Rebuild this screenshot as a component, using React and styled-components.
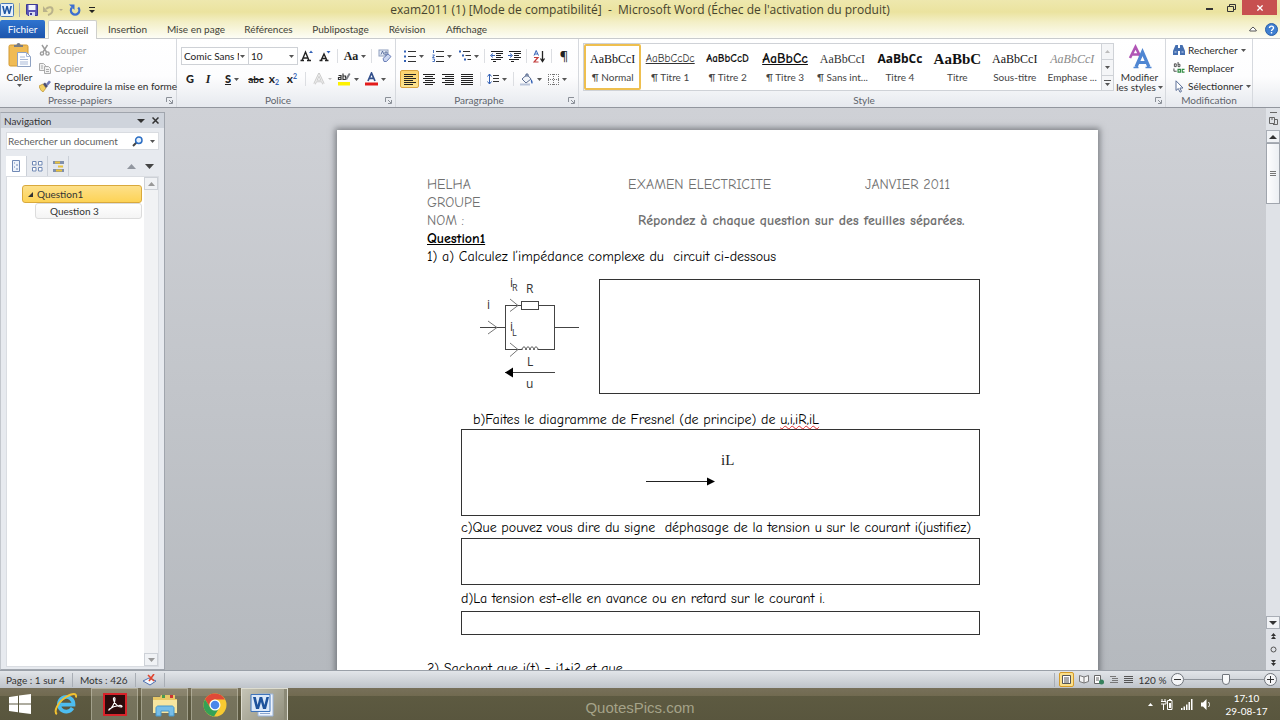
import React from "react"
import styled, { createGlobalStyle } from "styled-components"

const GlobalStyle = createGlobalStyle`
  * {
    box-sizing: border-box;
  }
  body {
    margin: 0;
    font-family: Lato, "Open Sans", sans-serif;
    font-size: 10px;
    line-height: 14px;
    color: #333;
  }
  button, input, select {
    font: inherit;
    color: inherit;
    margin: 0;
  }
  svg {
    display: block;
    flex: none;
  }
`

const Window = styled.div`
  height: 100vh;
  display: flex;
  flex-direction: column;
  overflow: hidden;
  background: #cdd0d5;
`

const TopBars = styled.header`
  background: linear-gradient(#eee8ae 0, #ebe39f 12px, #f3efc6 22px, #fdfdf5 38px);
`

const TitleBar = styled.div`
  height: 20px;
  display: grid;
  grid-template-columns: 1fr auto 1fr;
  align-items: center;
`

const QuickAccess = styled.div`
  display: flex;
  align-items: center;
  gap: 4px;
`

const Title = styled.h1`
  margin: 0;
  font-family: "Open Sans", "Noto Sans", sans-serif;
  font-size: 12px;
  line-height: 20px;
  font-weight: 400;
  color: #45432f;
  white-space: pre;
`

const WindowControls = styled.div`
  display: flex;
  justify-content: flex-end;
  align-self: start;
  padding-right: 3px;
`

const PlainButton = styled.button`
  border: 0;
  padding: 0;
  background: none;
  display: flex;
  align-items: center;
  justify-content: center;
  width: ${(p) => (p.$w ? `${p.$w}px` : "auto")};
  height: ${(p) => (p.$h ? `${p.$h}px` : "auto")};
`

const CloseButton = styled(PlainButton)`
  background: #c75050;
`

const TabBar = styled.nav`
  height: 19px;
  display: flex;
  align-items: stretch;
  border-bottom: 1px solid #c9cbcd;
`

const Tab = styled.button`
  border: 0;
  background: none;
  padding: 0;
  width: ${(p) => p.$w}px;
  color: #3f3f38;
  white-space: nowrap;
  &.file {
    color: #fff;
    border-radius: 2px 2px 0 0;
    background: linear-gradient(#2f74d0, #1d55ac);
    margin-right: 3px;
  }
  &.active {
    background: #fff;
    border: 1px solid #cfd0cc;
    border-bottom: 0;
    border-radius: 2px 2px 0 0;
    margin-bottom: -1px;
  }
`

const TabTools = styled.div`
  margin-left: auto;
  display: flex;
  align-items: center;
  gap: 8px;
  padding-right: 2px;
`

const Ribbon = styled.div`
  height: 69px;
  flex: none;
  display: flex;
  background: linear-gradient(#fff 0, #fdfdfe 55%, #e6e9ee 100%);
  border-bottom: 1px solid #92969e;
`

const Group = styled.section`
  width: ${(p) => (p.$w ? `${p.$w}px` : "auto")};
  flex: ${(p) => (p.$grow ? "1 1 0" : "none")};
  min-width: 0;
  display: flex;
  flex-direction: column;
  border-right: 1px solid #d6d9de;
`

const RibbonEnd = styled.div`
  width: 27px;
  flex: none;
`

const GroupBody = styled.div`
  height: 55px;
  display: flex;
  align-items: flex-start;
  padding: ${(p) => p.$pad || "0"};
`

const GroupName = styled.div`
  height: 13px;
  line-height: 13px;
  position: relative;
  text-align: center;
  color: #60646b;
  padding-right: ${(p) => (p.$plain ? 0 : 16)}px;
  svg {
    position: absolute;
    right: 3px;
    top: 3px;
  }
`

const BigButton = styled.button`
  border: 0;
  background: none;
  padding: 1px 0 0;
  width: ${(p) => p.$w}px;
  flex: none;
  display: flex;
  flex-direction: column;
  align-items: center;
  gap: ${(p) => p.$gap || 0}px;
  line-height: 10px;
  color: #333;
  > svg:first-child {
    margin-bottom: 2px;
  }
`

const BigLabel = styled.span`
  display: flex;
  align-items: center;
  gap: 2px;
  height: 10px;
  white-space: nowrap;
`

const Stack = styled.div`
  display: flex;
  flex-direction: column;
`

const Command = styled.button`
  border: 0;
  background: none;
  padding: 0;
  height: 18px;
  display: flex;
  align-items: center;
  gap: 3px;
  white-space: nowrap;
  color: ${(p) => (p.disabled ? "#9b9b9b" : "#2b2b2b")};
`

const ToolRows = styled.div`
  display: flex;
  flex-direction: column;
  gap: 5px;
`

const ToolRow = styled.div`
  display: flex;
  align-items: center;
  height: 18px;
`

const Tool = styled(PlainButton)`
  height: 18px;
  gap: 3px;
  flex: none;
  color: #222;
  font-weight: ${(p) => (p.$bold ? 700 : 400)};
  &.active {
    border: 1px solid #d9a441;
    border-radius: 2px;
    background: linear-gradient(#fbd36f, #fde48f);
  }
  &.serif {
    font-family: "Liberation Serif", serif;
    font-size: 12px;
    font-weight: 700;
  }
  &.italic {
    font-family: "Liberation Serif", serif;
    font-style: italic;
    font-size: 12px;
    font-weight: 700;
  }
  &.letter {
    font-size: 11px;
    font-weight: 900;
  }
  &.pilcrow {
    font-family: "Noto Sans", sans-serif;
    font-size: 13px;
  }
`

const ScriptTool = styled(Tool)`
  gap: 0;
  font-size: 12px;
  sub, sup {
    font-size: 7px;
    line-height: 7px;
    color: #3361b5;
  }
  sub {
    padding-top: 6px;
  }
  sup {
    padding-bottom: 6px;
  }
`

const Separator = styled.span`
  width: 1px;
  height: 14px;
  flex: none;
  margin: 0 ${(p) => p.$m || 0}px;
  background: ${(p) => (p.$dark ? "#a9aeb5" : "#dcdee2")};
`

const SelectBox = styled.span`
  display: flex;
  position: relative;
  flex: none;
  width: ${(p) => p.$w}px;
  height: 18px;
  border: 1px solid #ced1d6;
  margin-right: -1px;
  background: #fff;
  select {
    appearance: none;
    border: 0;
    background: none;
    padding: 0 0 0 2px;
    width: calc(100% - 9px);
    line-height: 16px;
    color: #222;
  }
  svg {
    position: absolute;
    right: 3px;
    top: 7px;
  }
`

const Gallery = styled.div`
  flex: 1;
  min-width: 0;
  height: 48px;
  display: flex;
  border: 1px solid #cfd2d7;
  background: #fff;
`

const StyleCard = styled.button`
  flex: 1 1 0;
  min-width: 0;
  padding: 0;
  border: 2px solid ${(p) => (p.$active ? "#eebf4f" : "transparent")};
  border-radius: 2px;
  background: none;
  overflow: hidden;
  display: flex;
  flex-direction: column;
  justify-content: center;
  gap: 2px;
  color: #444;
  span {
    display: block;
    width: 100%;
    overflow: hidden;
    white-space: nowrap;
    text-align: center;
  }
`

const Sample = styled.span`
  height: 18px;
  line-height: 18px;
  color: ${(p) => p.$color || "#111"};
  font-family: ${(p) => p.$font || `"Liberation Serif", serif`};
  font-size: ${(p) => p.$size || 12}px;
  font-weight: ${(p) => (p.$bold ? 700 : 400)};
  font-style: ${(p) => (p.$italic ? "italic" : "normal")};
  text-decoration: ${(p) => (p.$line ? "underline" : "none")};
`

const GalleryScroll = styled.div`
  width: 12px;
  flex: none;
  display: grid;
  grid-template-rows: repeat(3, 1fr);
  border-left: 1px solid #cfd2d7;
  background: #f4f5f7;
  button + button {
    border-top: 1px solid #cfd2d7;
  }
`

const Workspace = styled.div`
  flex: 1;
  min-height: 0;
  display: flex;
  background: linear-gradient(#cfd1d6, #b5b9be);
`

const NavPane = styled.aside`
  width: 165px;
  flex: none;
  margin-top: 4px;
  display: flex;
  flex-direction: column;
  background: #e7eaef;
  border: 1px solid #a0a5ad;
  border-left-color: #c3c7cd;
`

const NavHeader = styled.div`
  height: 15px;
  display: flex;
  align-items: center;
  gap: 7px;
  padding: 0 5px 0 3px;
  background: #cfd4dc;
  h2 {
    margin: 0 auto 0 0;
    font-size: 10px;
    font-weight: 400;
  }
`

const SearchRow = styled.label`
  margin: 4px 5px 0;
  height: 18px;
  display: flex;
  align-items: center;
  gap: 7px;
  padding: 0 3px 0 1px;
  background: #fff;
  border: 1px solid #d9dce1;
  input {
    flex: 1;
    min-width: 0;
    border: 0;
    padding: 0;
    outline: none;
    background: none;
  }
  input::placeholder {
    color: #5f5f5f;
    opacity: 1;
  }
`

const NavTabs = styled.div`
  margin: 6px 5px 0;
  height: 20px;
  display: flex;
  align-items: center;
`

const NavTab = styled(PlainButton)`
  width: 21px;
  height: 20px;
  background: ${(p) => (p.$active ? "#fff" : "none")};
  border-right: 1px solid #cbd0d8;
`

const NavArrows = styled.div`
  margin-left: auto;
  display: flex;
  gap: 9px;
  padding-right: 5px;
`

const NavBody = styled.div`
  flex: 1;
  margin: 0 5px 2px;
  display: flex;
  background: #fff;
  border: 1px solid #dadde2;
`

const Outline = styled.ul`
  list-style: none;
  margin: 0;
  padding: 8px 2px 0 15px;
  flex: 1;
`

const OutlineItem = styled.li`
  margin-left: ${(p) => p.$indent || 0}px;
  button {
    width: 100%;
    height: ${(p) => (p.$active ? 18 : 16)}px;
    display: flex;
    align-items: center;
    gap: 4px;
    padding: 0 0 0 ${(p) => (p.$active ? 5 : 14)}px;
    border-radius: 3px;
    border: 1px solid ${(p) => (p.$active ? "#d9a93c" : "#dcdcdc")};
    background: ${(p) => (p.$active ? "linear-gradient(#fde08a, #fdd356)" : "linear-gradient(#fff, #f4f4f4)")};
  }
`

const ScrollTrack = styled.div`
  width: 14px;
  flex: none;
  display: flex;
  flex-direction: column;
  align-items: stretch;
  justify-content: ${(p) => (p.$spread ? "space-between" : "flex-start")};
  background: ${(p) => (p.$spread ? "#f1f2f4" : "#dfe2e7")};
`

const ScrollButton = styled(PlainButton)`
  height: 13px;
  flex: none;
  border: 1px solid ${(p) => (p.$light ? "#cdd1d7" : "#a9aeb6")};
  background: #f0f2f5;
`

const ScrollThumb = styled.div`
  height: 61px;
  margin-bottom: auto;
  border: 1px solid #a0a5ad;
  background: linear-gradient(90deg, #fdfdfe, #eceff3);
  display: flex;
  align-items: center;
  justify-content: center;
`

const Canvas = styled.main`
  flex: 1;
  min-width: 0;
  overflow: hidden;
  padding: 22px 0 0 4px;
`

const Page = styled.article`
  width: 761px;
  min-height: 100%;
  margin: 0 auto;
  padding: 46px 118px 0 90px;
  background: #fff;
  box-shadow: 0 0 6px 2px rgba(60, 64, 70, 0.55);
  font-family: "Comic Sans MS", "Comic Neue", "Noto Sans", sans-serif;
  font-size: 14px;
  line-height: 18px;
  color: #000;
`

const HeadLine = styled.div`
  display: grid;
  grid-template-columns: 201px 237px 1fr;
  height: 18px;
  color: #707070;
  white-space: nowrap;
  strong {
    padding-left: 10px;
  }
`

const Heading = styled.h2`
  margin: 0;
  font-size: 14px;
  text-decoration: underline;
`

const Line = styled.p`
  margin: 0;
  height: 18px;
  padding-left: ${(p) => p.$indent || 0}px;
  white-space: pre;
  u {
    text-decoration: underline wavy #e03030 1px;
    text-underline-offset: 1px;
  }
`

const Figure = styled.div`
  display: flex;
  padding: 10px 0 16px 52px;
`

const AnswerBox = styled.div`
  height: ${(p) => p.$h}px;
  flex: ${(p) => (p.$fill ? 1 : "none")};
  margin: ${(p) => p.$m};
  border: 1px solid #333;
  display: flex;
  align-items: flex-start;
  justify-content: center;
`

const StatusBar = styled.footer`
  height: 18px;
  flex: none;
  display: flex;
  align-items: center;
  padding: 0 3px 0 6px;
  background: linear-gradient(#e2e5e9, #bfc4ca);
  border-top: 1px solid #9aa0a8;
  gap: 7px;
`

const StatusRight = styled.div`
  margin-left: auto;
  display: flex;
  align-items: center;
  gap: 4px;
`

const ViewButton = styled(PlainButton)`
  width: ${(p) => (p.$active ? 15 : 11)}px;
  height: 15px;
  border-radius: 2px;
  border: ${(p) => (p.$active ? "1px solid #d59b28" : "0")};
  background: ${(p) => (p.$active ? "#fbe08a" : "none")};
`

const ZoomLabel = styled.span`
  width: 29px;
  text-align: center;
  white-space: nowrap;
`

const ZoomBar = styled.div`
  display: flex;
  align-items: center;
`

const RoundButton = styled(PlainButton)`
  width: 13px;
  height: 13px;
  border-radius: 50%;
  border: 1px solid #6f747b;
  background: #f4f5f7;
`

const ZoomSlider = styled.input`
  appearance: none;
  width: 80px;
  height: 14px;
  background: linear-gradient(#8f949b, #8f949b) center / 100% 1px no-repeat;
  &::-webkit-slider-thumb {
    appearance: none;
    width: 8px;
    height: 11px;
    border: 1px solid #70757c;
    border-radius: 1px 1px 4px 4px;
    background: #f8f9fa;
  }
`

const TaskBar = styled.footer`
  height: 32px;
  flex: none;
  display: grid;
  grid-template-columns: 1fr auto 1fr;
  align-items: center;
  background: linear-gradient(#77705a 0, #716a50 8px, #5d5a41 8px, #59563e 100%);
`

const TaskItems = styled.div`
  display: flex;
  gap: 3px;
  height: 32px;
`

const TaskButton = styled(PlainButton)`
  width: ${(p) => p.$w || 47}px;
  height: 32px;
  background: ${(p) => (p.$open ? "rgba(255, 255, 240, 0.16)" : "none")};
  border: ${(p) => (p.$open ? "1px solid rgba(255, 255, 240, 0.32)" : "0")};
  border-bottom: 0;
  &.current {
    padding-right: 6px;
    background: linear-gradient(135deg, #c5c4b6, #8f8d7a);
    border-color: #dddccf;
    box-shadow: inset -3px 0 0 #8b8976;
  }
`

const Watermark = styled.span`
  font-family: "Liberation Sans", sans-serif;
  font-size: 15px;
  line-height: 24px;
  padding-top: 8px;
  color: #a5a389;
`

const Tray = styled.div`
  display: flex;
  justify-content: flex-end;
  align-items: center;
  gap: 8px;
  padding-right: 10px;
  color: #fff;
`

const Clock = styled.time`
  margin-left: 4px;
  width: 47px;
  text-align: center;
  line-height: 13px;
  padding-top: 2px;
  white-space: nowrap;
`

const Caret = ({ color = "#555", size = 5, up }) => (
  <svg width={size} height={Math.ceil(size / 2)} viewBox="0 0 6 3" preserveAspectRatio="none">
    <path d={up ? "M0 3h6L3 0z" : "M0 0h6L3 3z"} fill={color} />
  </svg>
)

const Launcher = () => (
  <svg width="7" height="7" viewBox="0 0 7 7" fill="none" stroke="#8b9098">
    <path d="M.5 5V.5H6M3 3l3 3M6.500 3v3.500H3" />
  </svg>
)

const WordLogo = ({ size = 14 }) => (
  <svg width={size} height={size} viewBox="0 0 14 14">
    <rect x="0.500" y="0.500" width="13" height="13" rx="1" fill="#e8f1fb" stroke="#4a7ab8" />
    <path d="M2 3l2 8h1.500L7 6l1.500 5H10l2-8h-1.700L9.200 8 7.800 3H6.300L4.900 8 3.700 3z" fill="#1f57a4" />
  </svg>
)

const SaveIcon = () => (
  <svg width="12" height="12" viewBox="0 0 12 12">
    <path d="M.5.5h11v11H2l-1.500-1.500z" fill="#5a55b8" stroke="#3f3b93" />
    <path d="M2.500 1h7v5h-7z" fill="#f4f6fb" />
    <path d="M3 8h6v4H3z" fill="#d7daf0" />
    <path d="M4 9h2v2H4z" fill="#3f3b93" />
  </svg>
)

const UndoIcon = () => (
  <svg width="11" height="11" viewBox="0 0 11 11" fill="none">
    <path d="M3 4c3-3 7-2 6.500 1.500C9.200 8 7 9.500 5 10" stroke="#b9b28b" strokeWidth="2" />
    <path d="M0 1v6h5z" fill="#b9b28b" />
  </svg>
)

const RedoIcon = () => (
  <svg width="12" height="12" viewBox="0 0 12 12" fill="none">
    <path d="M9.200 3.500A4.200 4.200 0 1 1 3 3.500" stroke="#3d6fd0" strokeWidth="2.300" />
    <path d="M0 .5h5.500V6z" fill="#3d6fd0" />
  </svg>
)

const PasteIcon = () => (
  <svg width="24" height="26" viewBox="0 0 24 26">
    <rect x="1" y="3" width="19" height="21" rx="1.500" fill="#f0bb54" stroke="#d29a35" />
    <path d="M6 5V3h2.500a2 2 0 0 1 4 0H15v2z" fill="#777c85" />
    <path d="M9.500 10.500h9l4 4v10h-13z" fill="#fdfeff" stroke="#8fa2c2" />
    <path d="M18.500 10.500v4h4M12 15h5M12 17.500h8M12 20h8M12 22h8" fill="none" stroke="#a9b9d6" />
  </svg>
)

const CutIcon = () => (
  <svg width="12" height="12" viewBox="0 0 12 12" fill="none" stroke="#9b9b9b" strokeWidth="1.400">
    <path d="M3 1l4.500 7M8.500 1L4 8" />
    <circle cx="3" cy="9.500" r="1.600" />
    <circle cx="8.500" cy="9.500" r="1.600" />
  </svg>
)

const CopyIcon = () => (
  <svg width="12" height="12" viewBox="0 0 12 12" fill="#f1f1f1" stroke="#aaa">
    <path d="M.5 1.500h4l2 2v5h-6z" />
    <path d="M5.500 4.500h4l2 2v5h-6zM7 7.500h3M7 9.500h3M2 4h2M2 6h2" />
  </svg>
)

const BrushIcon = () => (
  <svg width="12" height="12" viewBox="0 0 12 12">
    <path d="M0 6l4-2 3 4-3 4c-2-1-3-3-4-6z" fill="#f3d063" stroke="#b98f2c" strokeWidth=".7" />
    <path d="M4 4l2-1.500L9 6 7 8z" fill="#4c4f70" />
    <path d="M7 4l3-3.500L12 2 9 5.500z" fill="#6f78b5" />
  </svg>
)

const GrowIcon = ({ shrink }) => (
  <svg width="14" height="14" viewBox="0 0 14 14">
    <path
      d={shrink ? "M1.500 11.500h3M7 11.500h3.500M3 11.500L6 5l3 6.500M4 9.500h4" : "M.5 11.500h3.500M7 11.500h4M2 11.500L5.500 3 9 11.500M3.500 9h4"}
      fill="none"
      stroke="#222"
      strokeWidth="1.400"
    />
    <path d={shrink ? "M8.500 2h4l-2 2.500z" : "M9 4h4L11 1.500z"} fill="#3361b5" />
  </svg>
)

const ClearFormatIcon = () => (
  <svg width="14" height="14" viewBox="0 0 14 14">
    <rect x="1" y="1" width="9" height="6" fill="#e5ebf6" stroke="#8d9dbd" />
    <path d="M3 5.500L4.500 2 6 5.500M7 3h2v3H7z" fill="none" stroke="#445c90" strokeWidth=".8" />
    <path d="M5 9.500L10 5l3 2.500-4.500 5H6z" fill="#cbd6f0" stroke="#6c80b8" />
  </svg>
)

const HighlightIcon = () => (
  <svg width="14" height="14" viewBox="0 0 14 14">
    <path d="M1.500 3.500h2.500v4H1.500v-2H4M6 1.500v6h2.500v-3.500H6" fill="none" stroke="#333" strokeWidth="1.200" />
    <path d="M8 7l4-6 1.500 1L10 8z" fill="#7d7f86" />
    <path d="M1 10h12v3.500H1z" fill="#fdf100" />
  </svg>
)

const FontColorIcon = () => (
  <svg width="13" height="14" viewBox="0 0 13 14">
    <path d="M3 9L6.500 1 10 9M4.200 6.300h4.600" fill="none" stroke="#33508c" strokeWidth="1.700" />
    <path d="M0 10.500h13v3H0z" fill="#e31b1b" />
  </svg>
)

const TextEffectIcon = () => (
  <svg width="12" height="12" viewBox="0 0 12 12" fill="none">
    <path d="M1.500 11L6 1.500 10.500 11M3 8h6" stroke="#c9c9c9" strokeWidth="2.500" />
    <path d="M1.500 11L6 1.500 10.500 11M3 8h6" stroke="#f4f4f4" strokeWidth=".8" />
  </svg>
)

const ListIcon = ({ kind }) => (
  <svg width="12" height="12" viewBox="0 0 12 12" fill="none" stroke="#333">
    {kind === "bullet" && <path d="M0 1.500h2M0 6.500h2M0 11h2" stroke="#3361b5" strokeWidth="2" />}
    {kind === "number" && <path d="M1.500 0v3M.5 5h2L.5 7.500h2M.5 9h2v2.500h-2" stroke="#3361b5" strokeWidth=".9" />}
    {kind === "multi" ? (
      <>
        <path d="M0 1.500h2M3 5.500h2M5 9.500h2" stroke="#3361b5" strokeWidth="2" />
        <path d="M4 1.500h7M6.500 5.500H12M8.500 9.500H12" />
      </>
    ) : (
      <path d="M4 1.500h8M4 6.500h8M4 11.500h8" />
    )}
  </svg>
)

const IndentIcon = ({ right }) => (
  <svg width="13" height="12" viewBox="0 0 13 12" fill="none" stroke="#222">
    <path d="M1 1.500h12M6 3.500h7M6 5.500h5M6 7.500h7M1 9.500h10M3 11.500h3" />
    <path d={right ? "M0 5.500h3.500M2 3.500l2.500 2L2 7.500" : "M5 5.500H1.500M3 3.500l-2.500 2L3 7.500"} stroke="#3361b5" />
  </svg>
)

const SortIcon = () => (
  <svg width="13" height="13" viewBox="0 0 13 13" fill="none">
    <path d="M1 5.500L3.200.5 5.500 5.500M2 4h2.500" stroke="#3361b5" />
    <path d="M1 7.500h4L1 12h4.500" stroke="#c23b3b" strokeWidth="1.200" />
    <path d="M9.500 1v10M7.500 8.500l2 3 2-3" stroke="#222" strokeWidth="1.300" />
  </svg>
)

const AlignIcon = ({ d }) => (
  <svg width="12" height="11" viewBox="0 0 12 11" fill="none" stroke="#222">
    <path d={d} />
  </svg>
)

const LineSpacingIcon = () => (
  <svg width="12" height="12" viewBox="0 0 12 12" fill="none">
    <path d="M2.500 1v10M.5 3.500l2-2.500 2 2.500M.5 8.500l2 2.500 2-2.500" stroke="#3361b5" />
    <path d="M6 2.500h6M6 5.500h6M6 8.500h6" stroke="#333" />
  </svg>
)

const BucketIcon = () => (
  <svg width="14" height="13" viewBox="0 0 14 13">
    <path d="M2 6l5-4.500L11 6l-5 4z" fill="#f2f5fa" stroke="#5b6d92" />
    <path d="M6 4V1h2v3" fill="none" stroke="#5b6d92" />
    <path d="M11 6c2 2 2 4 1 5-1-1-1.500-3-1-5z" fill="#3361b5" />
    <path d="M0 10.500h10v2H0z" fill="#b9c4da" />
  </svg>
)

const BordersIcon = () => (
  <svg width="11" height="11" viewBox="0 0 11 11" fill="none" stroke="#777" strokeDasharray="1 1">
    <path d="M.5 0v11M5.500 0v11M10.500 0v11M0 .5h11M0 5.500h11M0 10.500h11" />
  </svg>
)

const ChangeStylesIcon = () => (
  <svg width="26" height="26" viewBox="0 0 26 26" fill="none">
    <path d="M3 14L8.500 3 14 14M5 10.500h7" stroke="#b055b5" strokeWidth="2.600" />
    <path d="M9 23L15.500 8 22 23M11.500 18.500h8" stroke="#4f86d2" strokeWidth="3.200" />
    <path d="M6.500 23.500h5M18.500 23.500h6" stroke="#4f86d2" strokeWidth="1.500" />
  </svg>
)

const BinocularsIcon = () => (
  <svg width="12" height="12" viewBox="0 0 12 12" fill="#456fb0">
    <path d="M2.500 1h2.500v3h2V1h2.500L12 7v4H7V7H5v4H0V7z" />
    <path d="M1.500 8h2M8.500 8h2" stroke="#c9d9f2" />
  </svg>
)

const ReplaceIcon = () => (
  <svg width="12" height="12" viewBox="0 0 13 13" fill="none">
    <path d="M1.500 2h2v3h-2zM5.500 0v5h2V2.500h-2M1 7v3h3" stroke="#444" />
    <path d="M5.500 8h2.500v3H5.500zM12.500 8H10v3h2.500" stroke="#2f8b42" strokeWidth="1.300" />
  </svg>
)

const PointerIcon = () => (
  <svg width="12" height="13" viewBox="0 0 12 13">
    <path d="M3 .8v9.700l2.300-2 1.700 3.700 1.500-.8-1.600-3.400H10z" fill="#fff" stroke="#5c7098" />
  </svg>
)

const CrossIcon = ({ color = "#333", size = 7 }) => (
  <svg width={size} height={size} viewBox="0 0 7 7" stroke={color} strokeWidth="1.500">
    <path d="M.5.5l6 6M6.500.5l-6 6" />
  </svg>
)

const CircuitDrawing = () => (
  <svg width="102" height="119" viewBox="0 0 102 119" fill="none" stroke="#444" overflow="visible" fontFamily="Open Sans, sans-serif">
    <path d="M1 51.500h25M26.500 29v45M75.500 29v45M76 51.500h24M26 29.500h17M59 29.500h17M26 73.500h17M59 73.500h17M26 96.500h50" />
    <path d="M9 45l9 6.500L9 58M31 23l8 6.500-8 6M31 67l8 6.500-8 7" stroke="#777" />
    <rect x="42.500" y="25.500" width="17" height="8" />
    <path d="M43 74c0-4 4-4 4 0 0-4 4-4 4 0 0-4 4-4 4 0 0-4 4-4 4 0" />
    <path d="M26 96.500l8-5v10z" fill="#000" stroke="none" />
    <g fill="#333" stroke="none" fontSize="12">
      <text x="8" y="33">i</text>
      <text x="31" y="11">i</text>
      <text x="33" y="15" fontSize="9">R</text>
      <text x="47" y="17">R</text>
      <text x="31" y="55">i</text>
      <text x="33" y="60" fontSize="9">L</text>
      <text x="48" y="90">L</text>
      <text x="47" y="112">u</text>
    </g>
  </svg>
)

const ArrowDrawing = () => (
  <svg width="152" height="70" viewBox="0 0 152 70">
    <path d="M1 51.500h64" stroke="#222" />
    <path d="M62 47.500l8 4-8 4z" fill="#000" />
    <text x="76" y="35" fontFamily="Liberation Serif, serif" fontSize="15" fill="#222">
      iL
    </text>
  </svg>
)

const comic = `"Comic Sans MS", "Comic Neue", sans-serif`

const tabs = [
  ["Insertion", 61],
  ["Mise en page", 76],
  ["Références", 69],
  ["Publipostage", 75],
  ["Révision", 58],
  ["Affichage", 61]
]

const wordStyles = [
  { name: "¶ Normal", sample: "AaBbCcI", active: true },
  { name: "¶ Titre 1", sample: "AaBbCcDc", font: comic, line: true, size: 11, color: "#333" },
  { name: "¶ Titre 2", sample: "AaBbCcD", font: comic, bold: true, size: 11 },
  { name: "¶ Titre 3", sample: "AaBbCc", font: comic, bold: true, line: true, size: 14 },
  { name: "¶ Sans int...", sample: "AaBbCcI", color: "#333" },
  { name: "Titre 4", sample: "AaBbCc", font: `"Open Sans", sans-serif`, bold: true, size: 12 },
  { name: "Titre", sample: "AaBbC", bold: true, size: 15 },
  { name: "Sous-titre", sample: "AaBbCcI" },
  { name: "Emphase ...", sample: "AaBbCcI", italic: true, color: "#8a8a8a" }
]

const aligns = {
  left: "M0 .5h12M0 2.500h9M0 4.500h12M0 6.500h9M0 8.500h12M0 10.500h9",
  center: "M0 .5h12M2 2.500h8M0 4.500h12M2 6.500h8M0 8.500h12M2 10.500h8",
  right: "M0 .5h12M3 2.500h9M0 4.500h12M3 6.500h9M0 8.500h12M3 10.500h9",
  justify: "M0 .5h12M0 2.500h12M0 4.500h12M0 6.500h12M0 8.500h12M0 10.500h12"
}

const Header = () => (
  <TopBars>
    <TitleBar>
      <QuickAccess>
        <WordLogo />
        <Separator $m={1} $dark />
        <PlainButton aria-label="Enregistrer" $w={13}>
          <SaveIcon />
        </PlainButton>
        <PlainButton aria-label="Annuler" $w={13}>
          <UndoIcon />
        </PlainButton>
        <Caret color="#b9b28b" size={4} />
        <PlainButton aria-label="Rétablir" $w={16}>
          <RedoIcon />
        </PlainButton>
        <PlainButton aria-label="Personnaliser" $w={10}>
          <svg width="6" height="6" viewBox="0 0 6 6">
            <path d="M0 0h6v1H0zM0 3h6L3 6z" fill="#222" />
          </svg>
        </PlainButton>
      </QuickAccess>
      <Title>exam2011 (1) [Mode de compatibilité]  -  Microsoft Word (Échec de l'activation du produit)</Title>
      <WindowControls>
        <PlainButton aria-label="Réduire" $w={22} $h={18}>
          <svg width="7" height="2">
            <path d="M0 1h7" stroke="#333" strokeWidth="2" />
          </svg>
        </PlainButton>
        <PlainButton aria-label="Restaurer" $w={22} $h={15}>
          <svg width="9" height="8" viewBox="0 0 9 8" fill="none" stroke="#333">
            <path d="M.5 2.500h6v5h-6zM2.500 2V.5h6v5H7" />
          </svg>
        </PlainButton>
        <CloseButton aria-label="Fermer" $w={35} $h={15}>
          <CrossIcon color="#fff" size={6} />
        </CloseButton>
      </WindowControls>
    </TitleBar>
    <TabBar>
      <Tab className="file" $w={45}>
        Fichier
      </Tab>
      <Tab className="active" $w={49}>
        Accueil
      </Tab>
      {tabs.map(([name, w]) => (
        <Tab key={name} $w={w}>
          {name}
        </Tab>
      ))}
      <TabTools>
        <PlainButton aria-label="Réduire le ruban">
          <svg width="8" height="6" viewBox="0 0 8 6" fill="#fff" stroke="#555">
            <path d="M.8 4L4 1l3.200 3v1H.8z" />
          </svg>
        </PlainButton>
        <PlainButton aria-label="Aide">
          <svg width="13" height="13" viewBox="0 0 13 13">
            <circle cx="6.500" cy="6.500" r="6" fill="#3f7fd0" stroke="#2a5fa8" />
            <path d="M4.500 5c0-2.500 4-2.500 4 0 0 1.500-2 1.500-2 3M6.500 9v1.500" fill="none" stroke="#fff" strokeWidth="1.400" />
          </svg>
        </PlainButton>
      </TabTools>
    </TabBar>
  </TopBars>
)

const FontGroup = () => (
  <Group $w={219}>
    <GroupBody $pad="8px 0 0 4px">
      <ToolRows>
        <ToolRow>
          <SelectBox $w={68}>
            <select aria-label="Police">
              <option>Comic Sans MS</option>
            </select>
            <Caret />
          </SelectBox>
          <SelectBox $w={50}>
            <select aria-label="Taille">
              <option>10</option>
            </select>
            <Caret />
          </SelectBox>
          <Tool aria-label="Agrandir la police" $w={19}>
            <GrowIcon />
          </Tool>
          <Tool aria-label="Réduire la police" $w={17}>
            <GrowIcon shrink />
          </Tool>
          <Separator $m={4} />
          <Tool className="serif" $w={26}>
            Aa <Caret />
          </Tool>
          <Separator $m={3} />
          <Tool aria-label="Effacer la mise en forme" $w={20}>
            <ClearFormatIcon />
          </Tool>
        </ToolRow>
        <ToolRow>
          <Tool className="letter" $w={18}>G</Tool>
          <Tool className="italic" $w={18}>I</Tool>
          <Tool className="letter" $w={30}>
            <u>S</u> <Caret />
          </Tool>
          <Tool $bold $w={18}>
            <s>abc</s>
          </Tool>
          <ScriptTool $bold $w={18}>
            x<sub>2</sub>
          </ScriptTool>
          <ScriptTool $bold $w={18}>
            x<sup>2</sup>
          </ScriptTool>
          <Separator $m={4} />
          <Tool aria-label="Effets de texte" $w={24}>
            <TextEffectIcon />
            <Caret color="#bbb" size={4} />
          </Tool>
          <Tool aria-label="Surlignage" $w={28}>
            <HighlightIcon />
            <Caret />
          </Tool>
          <Tool aria-label="Couleur de police" $w={26}>
            <FontColorIcon />
            <Caret />
          </Tool>
        </ToolRow>
      </ToolRows>
    </GroupBody>
    <GroupName>
      Police
      <Launcher />
    </GroupName>
  </Group>
)

const ParagraphGroup = () => (
  <Group $w={183}>
    <GroupBody $pad="8px 0 0 4px">
      <ToolRows>
        <ToolRow>
          <Tool aria-label="Puces" $w={28}>
            <ListIcon kind="bullet" />
            <Caret />
          </Tool>
          <Tool aria-label="Numérotation" $w={28}>
            <ListIcon kind="number" />
            <Caret />
          </Tool>
          <Tool aria-label="Liste à plusieurs niveaux" $w={26}>
            <ListIcon kind="multi" />
            <Caret />
          </Tool>
          <Separator $m={2} />
          <Tool aria-label="Diminuer le retrait" $w={18}>
            <IndentIcon />
          </Tool>
          <Tool aria-label="Augmenter le retrait" $w={18}>
            <IndentIcon right />
          </Tool>
          <Separator $m={3} />
          <Tool aria-label="Trier" $w={18}>
            <SortIcon />
          </Tool>
          <Separator $m={3} />
          <Tool className="pilcrow" $w={18}>¶</Tool>
        </ToolRow>
        <ToolRow>
          {Object.keys(aligns).map((key) => (
            <Tool key={key} aria-label={key} className={key === "left" ? "active" : ""} $w={19}>
              <AlignIcon d={aligns[key]} />
            </Tool>
          ))}
          <Separator $m={4} />
          <Tool aria-label="Interligne" $w={24}>
            <LineSpacingIcon />
            <Caret />
          </Tool>
          <Separator $m={4} />
          <Tool aria-label="Trame de fond" $w={26}>
            <BucketIcon />
            <Caret />
          </Tool>
          <Tool aria-label="Bordures" $w={26}>
            <BordersIcon />
            <Caret />
          </Tool>
        </ToolRow>
      </ToolRows>
    </GroupBody>
    <GroupName>
      Paragraphe
      <Launcher />
    </GroupName>
  </Group>
)

const StyleGroup = () => (
  <Group $grow>
    <GroupBody $pad="4px 0 0 4px">
      <Gallery>
        {wordStyles.map((s) => (
          <StyleCard key={s.name} $active={s.active}>
            <Sample $font={s.font} $bold={s.bold} $italic={s.italic} $line={s.line} $size={s.size} $color={s.color}>
              {s.sample}
            </Sample>
            <span>{s.name}</span>
          </StyleCard>
        ))}
        <GalleryScroll>
          <PlainButton aria-label="Ligne précédente">
            <Caret up color="#bbb" />
          </PlainButton>
          <PlainButton aria-label="Ligne suivante">
            <Caret />
          </PlainButton>
          <PlainButton aria-label="Autres styles">
            <svg width="7" height="6" viewBox="0 0 7 6">
              <path d="M0 0h7v1H0zM1 3h5L3.500 6z" fill="#555" />
            </svg>
          </PlainButton>
        </GalleryScroll>
      </Gallery>
      <BigButton $w={51}>
        <ChangeStylesIcon />
        <BigLabel>Modifier</BigLabel>
        <BigLabel>
          les styles <Caret />
        </BigLabel>
      </BigButton>
    </GroupBody>
    <GroupName>
      Style
      <Launcher />
    </GroupName>
  </Group>
)

const RibbonBar = () => (
  <Ribbon>
    <Group $w={177}>
      <GroupBody $pad="2px 0 0 0">
        <BigButton $w={39} $gap={2}>
          <PasteIcon />
          <BigLabel>Coller</BigLabel>
          <Caret />
        </BigButton>
        <Stack>
          <Command disabled>
            <CutIcon />
            Couper
          </Command>
          <Command disabled>
            <CopyIcon />
            Copier
          </Command>
          <Command>
            <BrushIcon />
            Reproduire la mise en forme
          </Command>
        </Stack>
      </GroupBody>
      <GroupName>
        Presse-papiers
        <Launcher />
      </GroupName>
    </Group>
    <FontGroup />
    <ParagraphGroup />
    <StyleGroup />
    <Group $w={87}>
      <GroupBody $pad="2px 0 0 7px">
        <Stack>
          <Command>
            <BinocularsIcon />
            Rechercher <Caret />
          </Command>
          <Command>
            <ReplaceIcon />
            Remplacer
          </Command>
          <Command>
            <PointerIcon />
            Sélectionner <Caret />
          </Command>
        </Stack>
      </GroupBody>
      <GroupName $plain>Modification</GroupName>
    </Group>
    <RibbonEnd />
  </Ribbon>
)

const Navigation = () => (
  <NavPane>
    <NavHeader>
      <h2>Navigation</h2>
      <Caret size={8} color="#333" />
      <PlainButton aria-label="Fermer le volet">
        <CrossIcon />
      </PlainButton>
    </NavHeader>
    <SearchRow>
      <input type="text" aria-label="Rechercher un document" placeholder="Rechercher un document" />
      <svg width="11" height="11" viewBox="0 0 11 11" fill="none">
        <path d="M1 10l3.500-3.500" stroke="#444" strokeWidth="2" />
        <circle cx="6.800" cy="4.200" r="3.200" stroke="#2d6fc4" strokeWidth="1.500" fill="#e8f2fd" />
      </svg>
      <Caret />
    </SearchRow>
    <NavTabs>
      <NavTab $active aria-label="Titres">
        <svg width="8" height="12" viewBox="0 0 8 12" fill="#eef3fb" stroke="#7089b5">
          <path d="M.5.500h7v11h-7zM2 3h1M4 5h2M2 7h1M4 9h2" />
        </svg>
      </NavTab>
      <NavTab aria-label="Pages">
        <svg width="11" height="11" viewBox="0 0 11 11" fill="#fff" stroke="#7089b5">
          <path d="M.5.500h3.500v3.500H.5zM6.500.500H10v3.500H6.500zM.5 6.500h3.500V10H.5zM6.500 6.500H10V10H6.500z" />
        </svg>
      </NavTab>
      <NavTab aria-label="Résultats">
        <svg width="11" height="11" viewBox="0 0 11 11">
          <path d="M0 0h11v3H0zM0 8h11v3H0z" fill="#8090ad" />
          <path d="M0 4h11v3H0z" fill="#dfe5f0" />
          <path d="M2 .5h5v2H2zM5 4.500h5v2H5zM3 8.500h6v2H3z" fill="#e9c23c" />
        </svg>
      </NavTab>
      <NavArrows>
        <Caret up size={9} color="#9297a0" />
        <Caret size={9} color="#444" />
      </NavArrows>
    </NavTabs>
    <NavBody>
      <Outline>
        <OutlineItem $active>
          <button>
            <svg width="5" height="5" viewBox="0 0 5 5">
              <path d="M5 0v5H0z" fill="#333" />
            </svg>
            Question1
          </button>
        </OutlineItem>
        <OutlineItem $indent={13}>
          <button>Question 3</button>
        </OutlineItem>
      </Outline>
      <ScrollTrack $spread>
        <ScrollButton $light aria-label="Haut">
          <Caret up size={7} color="#999" />
        </ScrollButton>
        <ScrollButton $light aria-label="Bas">
          <Caret size={7} color="#999" />
        </ScrollButton>
      </ScrollTrack>
    </NavBody>
  </NavPane>
)

const Document = () => (
  <Canvas>
    <Page>
      <HeadLine>
        <span>HELHA</span>
        <span>EXAMEN ELECTRICITE</span>
        <span>JANVIER 2011</span>
      </HeadLine>
      <HeadLine>
        <span>GROUPE</span>
      </HeadLine>
      <HeadLine>
        <span>NOM :</span>
        <strong>Répondez à chaque question sur des feuilles séparées.</strong>
      </HeadLine>
      <Heading>Question1</Heading>
      <Line>1) a) Calculez l’impédance complexe du  circuit ci-dessous</Line>
      <Figure>
        <CircuitDrawing />
        <AnswerBox $fill $h={115} $m="3px 0 0 18px" />
      </Figure>
      <Line $indent={46}>
        b)Faites le diagramme de Fresnel (de principe) de <u>u,i,iR,iL</u>
      </Line>
      <AnswerBox $h={87} $m="0 0 3px 34px">
        <ArrowDrawing />
      </AnswerBox>
      <Line $indent={34}>c)Que pouvez vous dire du signe  déphasage de la tension u sur le courant i(justifiez)</Line>
      <AnswerBox $h={47} $m="1px 0 5px 34px" />
      <Line $indent={34}>d)La tension est-elle en avance ou en retard sur le courant i.</Line>
      <AnswerBox $h={24} $m="3px 0 25px 34px" />
      <Line>2) Sachant que i(t) = i1+i2 et que</Line>
    </Page>
  </Canvas>
)

const DocumentScroll = () => (
  <ScrollTrack>
    <PlainButton aria-label="Règle" $h={22}>
      <svg width="9" height="14" viewBox="0 0 9 14" fill="none" stroke="#666">
        <path d="M1 .5h7M.5 5.500h5v6h-5zM5 7.500h3.500v5H4M2 7h2" />
      </svg>
    </PlainButton>
    <ScrollButton aria-label="Défiler vers le haut">
      <Caret up size={8} color="#333" />
    </ScrollButton>
    <ScrollThumb>
      <svg width="6" height="6" stroke="#777">
        <path d="M0 .5h6M0 2.500h6M0 4.500h6" />
      </svg>
    </ScrollThumb>
    <ScrollButton aria-label="Défiler vers le bas">
      <Caret size={8} color="#333" />
    </ScrollButton>
    <PlainButton aria-label="Page précédente" $h={14}>
      <svg width="5" height="6" viewBox="0 0 5 6" fill="#333">
        <path d="M0 3h5L2.500 0zM0 6h5L2.500 3z" />
      </svg>
    </PlainButton>
    <PlainButton aria-label="Objet" $h={13}>
      <svg width="7" height="7" fill="none" stroke="#555">
        <circle cx="3.500" cy="3.500" r="2.500" />
      </svg>
    </PlainButton>
    <PlainButton aria-label="Page suivante" $h={14}>
      <svg width="5" height="6" viewBox="0 0 5 6" fill="#333">
        <path d="M0 0h5L2.500 3zM0 3h5L2.500 6z" />
      </svg>
    </PlainButton>
  </ScrollTrack>
)

const Status = () => (
  <StatusBar>
    <span>Page : 1 sur 4</span>
    <Separator $dark />
    <span>Mots : 426</span>
    <Separator $dark />
    <PlainButton aria-label="Vérification">
      <svg width="14" height="12" viewBox="0 0 14 12">
        <path d="M0 7l6-3 7 3-6 4z" fill="#f4f7fc" stroke="#4f70b0" />
        <path d="M5 1l6 6M11 0L6 7" stroke="#e0442e" strokeWidth="1.600" />
      </svg>
    </PlainButton>
    <Separator $dark />
    <StatusRight>
      <Separator $dark />
      <ViewButton $active aria-label="Page">
        <svg width="9" height="9" viewBox="0 0 9 9" fill="#fff" stroke="#555">
          <path d="M.5.500h8v8h-8zM2 3h5M2 5h5M2 7h5" />
        </svg>
      </ViewButton>
      <ViewButton aria-label="Lecture">
        <svg width="10" height="9" viewBox="0 0 10 9" fill="#f4f4f4" stroke="#777">
          <path d="M.5.500L5 2l4.500-1.500v6L5 8 .5 6.500zM5 2v6" />
        </svg>
      </ViewButton>
      <ViewButton aria-label="Web">
        <svg width="10" height="10" viewBox="0 0 10 10">
          <path d="M.5.500h6v8h-6zM2 3h3M2 5h3" fill="#fff" stroke="#666" />
          <circle cx="7.500" cy="7" r="2.500" fill="#35805c" />
        </svg>
      </ViewButton>
      <ViewButton aria-label="Plan">
        <svg width="8" height="8" stroke="#777">
          <path d="M0 .5h6M2 2.500h6M2 4.500h6M0 6.500h8" />
        </svg>
      </ViewButton>
      <ViewButton aria-label="Brouillon">
        <svg width="9" height="8" stroke="#555">
          <path d="M0 .5h9M0 2.500h9M0 4.500h9M0 6.500h9" />
        </svg>
      </ViewButton>
      <ZoomLabel>120 %</ZoomLabel>
      <ZoomBar>
        <RoundButton aria-label="Zoom arrière">
          <svg width="7" height="7" stroke="#333">
            <path d="M0 3.500h7" />
          </svg>
        </RoundButton>
        <ZoomSlider type="range" aria-label="Zoom" min="0" max="100" defaultValue="53" />
        <RoundButton aria-label="Zoom avant">
          <svg width="7" height="7" stroke="#333">
            <path d="M0 3.500h7M3.500 0v7" />
          </svg>
        </RoundButton>
      </ZoomBar>
    </StatusRight>
  </StatusBar>
)

const Tasks = () => (
  <TaskBar>
    <TaskItems>
      <TaskButton aria-label="Démarrer" $w={40}>
        <svg width="22" height="20" viewBox="0 0 22 20" fill="#fff">
          <path d="M0 3l9-1.300v7.800H0zM10 1.500L22 0v9.500H10zM0 10.500h9v7.800L0 17zM10 10.500h12V20l-12-1.500z" />
        </svg>
      </TaskButton>
      <TaskButton aria-label="Internet Explorer" $w={45}>
        <svg width="24" height="24" viewBox="0 0 24 24" fill="none">
          <path d="M18.500 16A7.300 7.300 0 1 1 19.500 12.700H7" stroke="#4dbdf0" strokeWidth="3.800" />
          <path d="M3 22C-1 20 4 10 12 5c6-4 11-4.500 10 .5" stroke="#f2c230" strokeWidth="2" />
        </svg>
      </TaskButton>
      <TaskButton aria-label="Acrobat" $open>
        <svg width="24" height="23" viewBox="0 0 24 23">
          <rect x="1" y="1" width="22" height="21" fill="#2c0b0c" stroke="#d8232a" strokeWidth="2" />
          <path
            d="M6 17c3-2 6-7 6-11 0-2-2-1.500-1.500.5C11.500 11 15 14 18 14c2 0 1-2-2-1.500-4 .5-7 1.500-9.500 3.500-1 1-.5 1.500-.5 1z"
            fill="none"
            stroke="#fff"
            strokeWidth="1.200"
          />
        </svg>
      </TaskButton>
      <TaskButton aria-label="Explorateur" $open>
        <svg width="26" height="24" viewBox="0 0 26 24">
          <path d="M1 4h7l1-2h14v4h2v14H1z" fill="#e8c766" />
          <path d="M10 2h3v3h-3z" fill="#4a9a50" />
          <path d="M18 2h3v3h-3z" fill="#c33" />
          <path d="M1 7h24v13H1z" fill="#f7e5a0" />
          <path d="M4 23v-8c0-1 1-2 2-2h14c1 0 2 1 2 2v8h-5v-5H9v5z" fill="#76bde8" stroke="#4596cc" />
        </svg>
      </TaskButton>
      <TaskButton aria-label="Chrome" $open>
        <svg width="24" height="24" viewBox="0 0 24 24">
          <circle cx="12" cy="12" r="11.500" fill="#f7ca31" />
          <path d="M2 6.200A11.500 11.500 0 0 1 22 6.500H12a5.500 5.500 0 0 0-5 8z" fill="#df4938" />
          <path d="M2 6.200A11.500 11.500 0 0 0 11 23.400l5.500-9A5.500 5.500 0 0 1 7 14.300z" fill="#35a156" />
          <circle cx="12" cy="12" r="5.500" fill="#fff" />
          <circle cx="12" cy="12" r="4.300" fill="#4b86ea" />
        </svg>
      </TaskButton>
      <TaskButton aria-label="Word" className="current" $open>
        <svg width="24" height="24" viewBox="0 0 24 24">
          <path d="M8 1h15v22H8z" fill="#eef4fc" stroke="#9ab4da" />
          <path d="M1 1.500h19v17H1z" fill="#dbe8f8" stroke="#3f74bb" />
          <path d="M3 4l3 12h3l2-7 2 7h3l3-12h-2.600L14.400 12l-2.200-8H9.600L7.600 12 5.800 4z" fill="#1d529c" />
          <path d="M10 20.500h10" stroke="#8aa5ce" />
        </svg>
      </TaskButton>
    </TaskItems>
    <Watermark>QuotesPics.com</Watermark>
    <Tray>
      <Caret up color="#fff" size={5} />
      <svg width="12" height="12" viewBox="0 0 12 12" fill="none" stroke="#fff">
        <path d="M1 1v2M4 1v2M0 3.500h5v2.500H0M2.500 6v6M6.500 2.500h4.500v9H6.500zM8 1.500h2" />
        <path d="M8 5h2v5H8z" fill="#fff" stroke="none" />
      </svg>
      <svg width="12" height="11" viewBox="0 0 12 11" fill="#fff">
        <path d="M0 9h1.500v2H0zM2.500 7.500H4V11H2.500zM5 5.500h1.500V11H5zM7.500 3H9v8H7.500zM10 0h1.500v11H10z" />
      </svg>
      <svg width="10" height="11" viewBox="0 0 10 11" fill="#fff">
        <path d="M0 3.500h2L5.500 0v11L2 7.500H0z" />
        <path d="M7.500 3c1.300 1.500 1.300 3.500 0 5" fill="none" stroke="#fff" />
      </svg>
      <Clock>
        17:10
        <br />
        29-08-17
      </Clock>
    </Tray>
  </TaskBar>
)

const App = () => (
  <>
    <GlobalStyle />
    <Window>
      <Header />
      <RibbonBar />
      <Workspace>
        <Navigation />
        <Document />
        <DocumentScroll />
      </Workspace>
      <Status />
      <Tasks />
    </Window>
  </>
)

export default App
